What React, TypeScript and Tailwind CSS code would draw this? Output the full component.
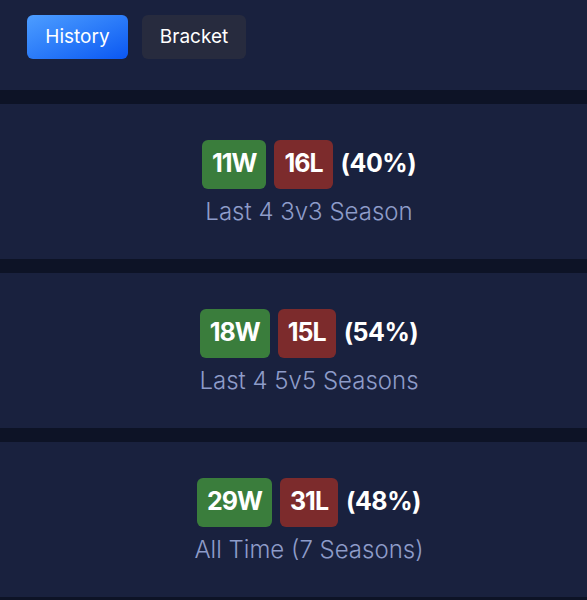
// Season record summary: tab bar on top, one card per period below

const records = [
  { wins: 11, losses: 16, pct: 40, label: 'Last 4 3v3 Season' },
  { wins: 18, losses: 15, pct: 54, label: 'Last 4 5v5 Seasons' },
  { wins: 29, losses: 31, pct: 48, label: 'All Time (7 Seasons)' },
]

function RecordCard({ wins, losses, pct, label }: (typeof records)[number]) {
  return (
    <div className="flex h-[155px] flex-col items-center justify-center bg-[#19213e] pl-[31px] pt-[3px]">
      <div className="flex items-center gap-2">
        <span className="flex h-[49px] items-center rounded-md bg-[#3a7d3c] px-[10px] text-[25px] font-bold tracking-[-1px] text-white">
          {wins}W
        </span>
        <span className="flex h-[49px] items-center rounded-md bg-[#7c2b2c] px-[10px] text-[25px] font-bold tracking-[-1px] text-white">
          {losses}L
        </span>
        <span className="text-[25px] font-bold tracking-[-0.5px] text-white">({pct}%)</span>
      </div>
      <div className="mt-[8px] text-[24px] font-light leading-[30px] text-[#8e9cc9]">{label}</div>
    </div>
  )
}

export default function App() {
  return (
    <div
      className="flex min-h-[600px] w-[587px] flex-col gap-[14px] bg-[#0d1326]"
      style={{ fontFamily: 'Inter, "Noto Sans", sans-serif' }}
    >
      {/* Tabs */}
      <div className="flex h-[90px] gap-[14px] bg-[#19213e] pl-[27px] pt-[15px]">
        <button className="h-[44px] w-[101px] rounded-md bg-gradient-to-br from-[#4d9dff] to-[#0b56f2] text-[19px] text-white">
          History
        </button>
        <button className="h-[44px] w-[104px] rounded-md bg-[#272b3e] text-[19px] text-white">
          Bracket
        </button>
      </div>

      {records.map((r) => (
        <RecordCard key={r.label} {...r} />
      ))}
    </div>
  )
}
